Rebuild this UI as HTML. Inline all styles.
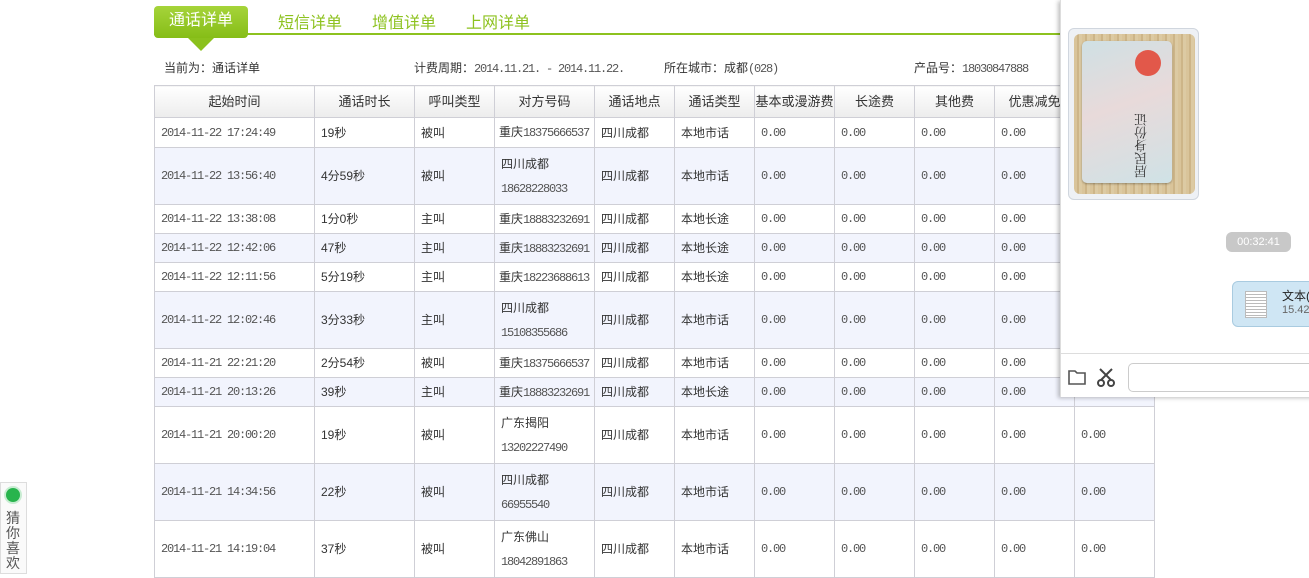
<!DOCTYPE html>
<html><head><meta charset="utf-8"><style>
*{margin:0;padding:0;box-sizing:border-box}
body{width:1309px;height:572px;overflow:hidden;background:#fff;position:relative;font-family:"Liberation Sans","Noto Sans CJK SC",sans-serif;font-size:12px;color:#333}
.a{position:absolute}
.tab{position:absolute;top:9px;font-size:16px;color:#8dc21f}
table{position:absolute;left:154px;top:85px;width:1000px;border-collapse:collapse;table-layout:fixed}
td,th{border:1px solid #cfcfd6;padding:0 6px;font-weight:normal;font-size:12px;line-height:14px;color:#333;text-align:left;vertical-align:middle;white-space:nowrap;overflow:hidden}
th{text-align:center;background:linear-gradient(#fff,#ececec);height:32px;font-size:13px;color:#333;padding:0}
tr.b td{background:#f2f4fd}
.m{font-family:"Liberation Mono",monospace;font-size:12px;letter-spacing:-1.2px;color:#555}
td.two{line-height:24px}
</style></head><body>
<div class="a" style="left:154px;top:33px;width:906px;height:2px;background:#8dc21f"></div>
<div class="a" style="left:154px;top:6px;width:94px;height:32px;border-radius:4px;background:linear-gradient(#a6d43a,#86bd17);color:#fff;font-size:16px;text-align:center;line-height:30px">通话详单</div>
<div class="a" style="left:188px;top:38px;width:0;height:0;border-left:13px solid transparent;border-right:13px solid transparent;border-top:13px solid #8bc11d"></div>
<div class="tab" style="left:278px">短信详单</div>
<div class="tab" style="left:372px">增值详单</div>
<div class="tab" style="left:466px">上网详单</div>
<div class="a" style="left:164px;top:59px;font-size:12px">当前为：通话详单</div>
<div class="a" style="left:414px;top:59px;font-size:12px">计费周期：<span class="m">2014.11.21. - 2014.11.22.</span></div>
<div class="a" style="left:664px;top:59px;font-size:12px">所在城市：成都<span class="m">(028)</span></div>
<div class="a" style="left:914px;top:59px;font-size:12px">产品号：<span class="m">18030847888</span></div>
<table>
<colgroup><col style="width:160px"><col style="width:100px"><col style="width:80px"><col style="width:100px"><col style="width:80px"><col style="width:80px"><col style="width:80px"><col style="width:80px"><col style="width:80px"><col style="width:80px"><col style="width:80px"></colgroup>
<tr><th>起始时间</th><th>通话时长</th><th>呼叫类型</th><th>对方号码</th><th>通话地点</th><th>通话类型</th><th>基本或漫游费</th><th>长途费</th><th>其他费</th><th>优惠减免</th><th></th></tr>
<tr style="height:30px"><td class="m">2014-11-22 17:24:49</td><td>19秒</td><td>被叫</td><td style="padding:0 4px">重庆<span class="m">18375666537</span></td><td>四川成都</td><td>本地市话</td><td class="m">0.00</td><td class="m">0.00</td><td class="m">0.00</td><td class="m">0.00</td><td></td></tr>
<tr class="b" style="height:57px"><td class="m">2014-11-22 13:56:40</td><td>4分59秒</td><td>被叫</td><td class="two">四川成都<br><span class="m">18628228033</span></td><td>四川成都</td><td>本地市话</td><td class="m">0.00</td><td class="m">0.00</td><td class="m">0.00</td><td class="m">0.00</td><td></td></tr>
<tr style="height:29px"><td class="m">2014-11-22 13:38:08</td><td>1分0秒</td><td>主叫</td><td style="padding:0 4px">重庆<span class="m">18883232691</span></td><td>四川成都</td><td>本地长途</td><td class="m">0.00</td><td class="m">0.00</td><td class="m">0.00</td><td class="m">0.00</td><td></td></tr>
<tr class="b" style="height:29px"><td class="m">2014-11-22 12:42:06</td><td>47秒</td><td>主叫</td><td style="padding:0 4px">重庆<span class="m">18883232691</span></td><td>四川成都</td><td>本地长途</td><td class="m">0.00</td><td class="m">0.00</td><td class="m">0.00</td><td class="m">0.00</td><td></td></tr>
<tr style="height:29px"><td class="m">2014-11-22 12:11:56</td><td>5分19秒</td><td>主叫</td><td style="padding:0 4px">重庆<span class="m">18223688613</span></td><td>四川成都</td><td>本地长途</td><td class="m">0.00</td><td class="m">0.00</td><td class="m">0.00</td><td class="m">0.00</td><td></td></tr>
<tr class="b" style="height:57px"><td class="m">2014-11-22 12:02:46</td><td>3分33秒</td><td>主叫</td><td class="two">四川成都<br><span class="m">15108355686</span></td><td>四川成都</td><td>本地市话</td><td class="m">0.00</td><td class="m">0.00</td><td class="m">0.00</td><td class="m">0.00</td><td></td></tr>
<tr style="height:29px"><td class="m">2014-11-21 22:21:20</td><td>2分54秒</td><td>被叫</td><td style="padding:0 4px">重庆<span class="m">18375666537</span></td><td>四川成都</td><td>本地市话</td><td class="m">0.00</td><td class="m">0.00</td><td class="m">0.00</td><td class="m">0.00</td><td></td></tr>
<tr class="b" style="height:29px"><td class="m">2014-11-21 20:13:26</td><td>39秒</td><td>主叫</td><td style="padding:0 4px">重庆<span class="m">18883232691</span></td><td>四川成都</td><td>本地长途</td><td class="m">0.00</td><td class="m">0.00</td><td class="m">0.00</td><td class="m">0.00</td><td></td></tr>
<tr style="height:57px"><td class="m">2014-11-21 20:00:20</td><td>19秒</td><td>被叫</td><td class="two">广东揭阳<br><span class="m">13202227490</span></td><td>四川成都</td><td>本地市话</td><td class="m">0.00</td><td class="m">0.00</td><td class="m">0.00</td><td class="m">0.00</td><td class="m">0.00</td></tr>
<tr class="b" style="height:57px"><td class="m">2014-11-21 14:34:56</td><td>22秒</td><td>被叫</td><td class="two">四川成都<br><span class="m">66955540</span></td><td>四川成都</td><td>本地市话</td><td class="m">0.00</td><td class="m">0.00</td><td class="m">0.00</td><td class="m">0.00</td><td class="m">0.00</td></tr>
<tr style="height:57px"><td class="m">2014-11-21 14:19:04</td><td>37秒</td><td>被叫</td><td class="two">广东佛山<br><span class="m">18042891863</span></td><td>四川成都</td><td>本地市话</td><td class="m">0.00</td><td class="m">0.00</td><td class="m">0.00</td><td class="m">0.00</td><td class="m">0.00</td></tr>
</table>
<!-- left widget -->
<div class="a" style="left:0;top:482px;width:27px;height:92px;border:1px solid #ddd;background:#fafafa"></div>
<div class="a" style="left:6px;top:488px;width:14px;height:14px;border-radius:50%;background:#28b44d;box-shadow:0 0 0 2px #c8ecd2"></div>
<div class="a" style="left:6px;top:511px;width:16px;font-size:14px;line-height:15px;color:#555">猜你喜欢</div>
<!-- chat panel -->
<div class="a" style="left:1060px;top:0;width:260px;height:397px;background:#fff;box-shadow:-2px 1px 4px rgba(0,0,0,.25);border-left:1px solid #ddd"></div>
<div class="a" style="left:1068px;top:28px;width:131px;height:172px;border:1px solid #d0d6de;border-radius:6px;background:#eef1f5"></div>
<div class="a" style="left:1074px;top:34px;width:121px;height:160px;border-radius:6px;background:repeating-linear-gradient(90deg,#d9c49a 0 3px,#cdb588 3px 5px,#dccaa3 5px 8px)"></div>
<div class="a" style="left:1082px;top:41px;width:90px;height:142px;border-radius:5px;background:linear-gradient(160deg,#cfe0e4,#e8dada 45%,#cfe2e6);box-shadow:0 1px 2px rgba(0,0,0,.3)"></div>
<div class="a" style="left:1135px;top:50px;width:26px;height:26px;border-radius:50%;background:#e2584a"></div>
<div class="a" style="left:1133px;top:88px;width:34px;height:90px;font-family:'Noto Serif CJK SC',serif;font-size:13px;line-height:16px;color:#333;writing-mode:vertical-rl;transform:rotate(180deg)">居民身份证</div>
<div class="a" style="left:1226px;top:232px;width:65px;height:20px;border-radius:6px;background:#c8c8c8;color:#fff;font-size:11px;text-align:center;line-height:20px">00:32:41</div>
<div class="a" style="left:1232px;top:281px;width:90px;height:46px;border-radius:6px;background:#cfe6f4;border:1px solid #a9cbe0"></div>
<div class="a" style="left:1245px;top:291px;width:22px;height:27px;background:repeating-linear-gradient(#fff 0 2px,#bbb 2px 3px);border:1px solid #bbb"></div>
<div class="a" style="left:1282px;top:287px;font-size:12px;color:#222;white-space:nowrap">文本(</div>
<div class="a" style="left:1282px;top:304px;font-size:11px;color:#666;white-space:nowrap">15.42</div>
<div class="a" style="left:1060px;top:353px;width:260px;height:1px;background:#ddd"></div>
<svg class="a" style="left:1067px;top:367px" width="20" height="20" viewBox="0 0 20 20"><path d="M2 4h6l2 2h8v11H2z" fill="none" stroke="#555" stroke-width="1.6"/></svg>
<svg class="a" style="left:1096px;top:366px" width="20" height="22" viewBox="0 0 20 22"><path d="M4 3l11 11M16 3L5 14" stroke="#444" stroke-width="2"/><circle cx="5" cy="17" r="3" fill="none" stroke="#444" stroke-width="2"/><circle cx="15" cy="17" r="3" fill="none" stroke="#444" stroke-width="2"/></svg>
<div class="a" style="left:1128px;top:363px;width:190px;height:29px;border:1px solid #ccc;border-radius:5px"></div>
</body></html>
